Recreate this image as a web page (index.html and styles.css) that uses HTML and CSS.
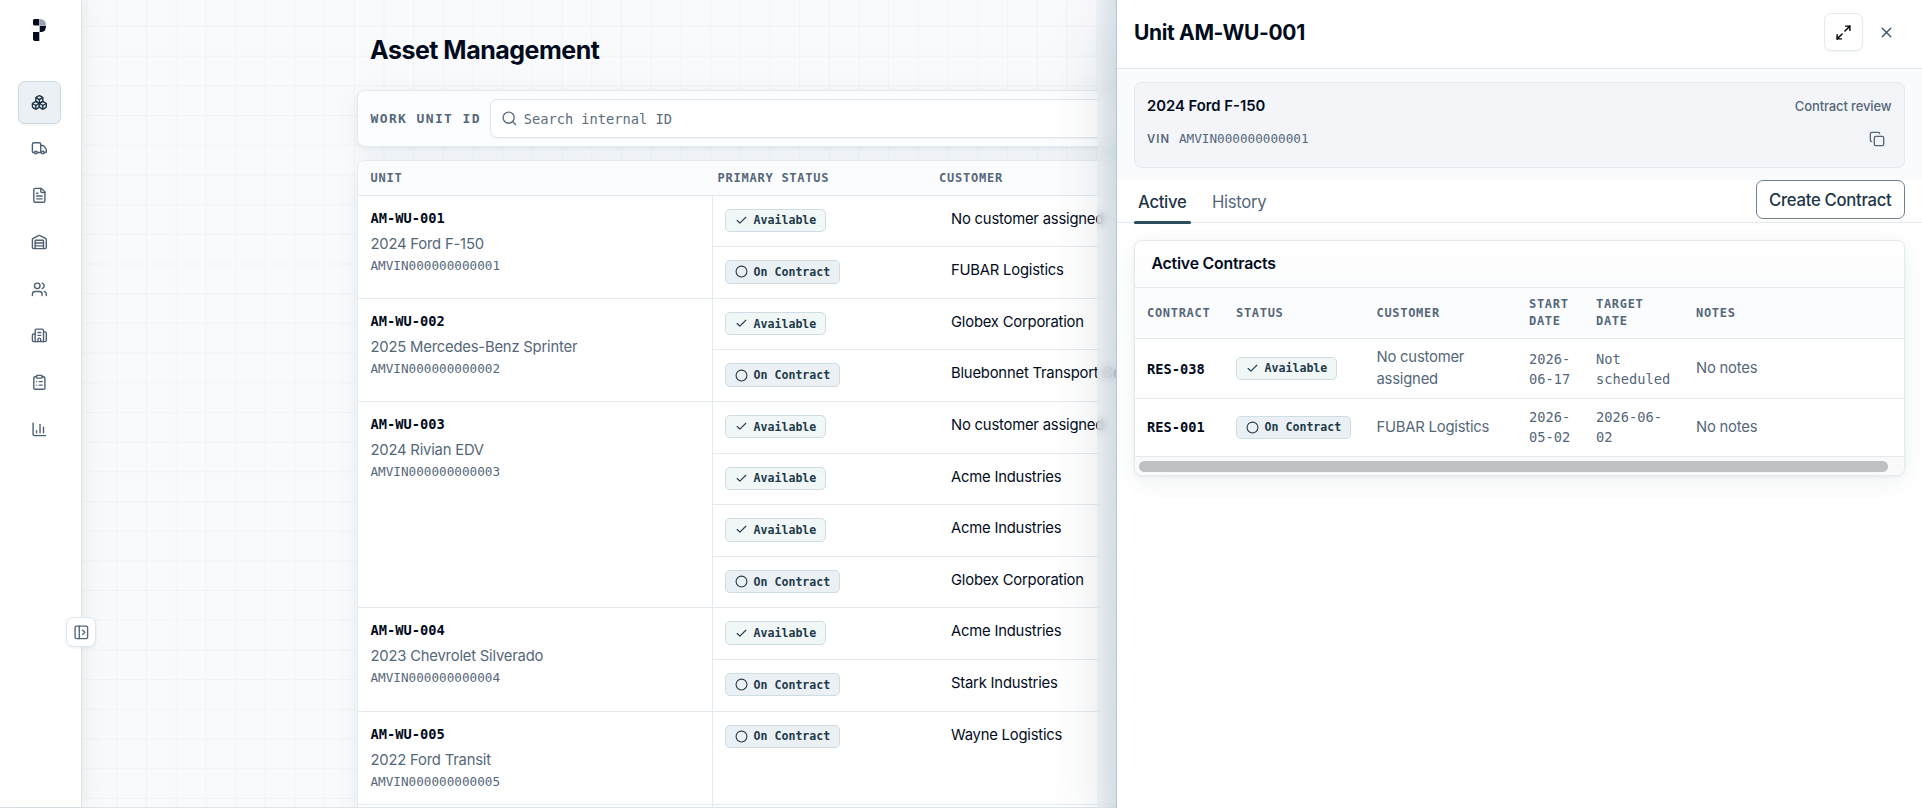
FILE: index.html
```
<!DOCTYPE html>
<html lang="en">
<head>
<meta charset="utf-8">
<title>Asset Management</title>
<link rel="stylesheet" href="styles.css">
</head>
<body>
<svg class="sprite" aria-hidden="true">
  <symbol id="i-boxes" viewBox="0 0 24 24"><path d="M2.97 12.92A2 2 0 0 0 2 14.63v3.24a2 2 0 0 0 .97 1.71l3 1.8a2 2 0 0 0 2.06 0L12 19v-5.5l-5-3-4.03 2.42Z"/><path d="m7 16.5-4.74-2.85"/><path d="m7 16.5 5-3"/><path d="M7 16.5v5.17"/><path d="M12 13.5V19l3.97 2.38a2 2 0 0 0 2.06 0l3-1.8a2 2 0 0 0 .97-1.71v-3.24a2 2 0 0 0-.97-1.71L17 10.5l-5 3Z"/><path d="m17 16.5-5-3"/><path d="m17 16.5 4.74-2.85"/><path d="M17 16.5v5.17"/><path d="M7.97 4.42A2 2 0 0 0 7 6.13v4.37l5 3 5-3V6.13a2 2 0 0 0-.97-1.71l-3-1.8a2 2 0 0 0-2.06 0l-3 1.8Z"/><path d="M12 8 7.26 5.15"/><path d="m12 8 4.74-2.85"/><path d="M12 13.5V8"/></symbol>
  <symbol id="i-truck" viewBox="0 0 24 24"><path d="M14 18V6a2 2 0 0 0-2-2H4a2 2 0 0 0-2 2v11a1 1 0 0 0 1 1h2"/><path d="M15 18H9"/><path d="M19 18h2a1 1 0 0 0 1-1v-3.65a1 1 0 0 0-.22-.624l-3.48-4.35A1 1 0 0 0 17.52 8H14"/><circle cx="17" cy="18" r="2"/><circle cx="7" cy="18" r="2"/></symbol>
  <symbol id="i-file" viewBox="0 0 24 24"><path d="M15 2H6a2 2 0 0 0-2 2v16a2 2 0 0 0 2 2h12a2 2 0 0 0 2-2V7Z"/><path d="M14 2v4a2 2 0 0 0 2 2h4"/><path d="M10 9H8"/><path d="M16 13H8"/><path d="M16 17H8"/></symbol>
  <symbol id="i-warehouse" viewBox="0 0 24 24"><path d="M18 21V10a1 1 0 0 0-1-1H7a1 1 0 0 0-1 1v11"/><path d="M22 19a2 2 0 0 1-2 2H4a2 2 0 0 1-2-2V8a2 2 0 0 1 1.132-1.803l7.95-3.974a2 2 0 0 1 1.837 0l7.948 3.974A2 2 0 0 1 22 8z"/><path d="M6 13h12"/><path d="M6 17h12"/></symbol>
  <symbol id="i-users" viewBox="0 0 24 24"><path d="M16 21v-2a4 4 0 0 0-4-4H6a4 4 0 0 0-4 4v2"/><circle cx="9" cy="7" r="4"/><path d="M22 21v-2a4 4 0 0 0-3-3.87"/><path d="M16 3.13a4 4 0 0 1 0 7.75"/></symbol>
  <symbol id="i-building" viewBox="0 0 24 24"><path d="M10 12h4"/><path d="M10 8h4"/><path d="M14 21v-3a2 2 0 0 0-4 0v3"/><path d="M6 10H4a2 2 0 0 0-2 2v7a2 2 0 0 0 2 2h16a2 2 0 0 0 2-2V9a2 2 0 0 0-2-2h-2"/><path d="M6 21V5a2 2 0 0 1 2-2h8a2 2 0 0 1 2 2v16"/></symbol>
  <symbol id="i-clipboard" viewBox="0 0 24 24"><rect width="8" height="4" x="8" y="2" rx="1"/><path d="M16 4h2a2 2 0 0 1 2 2v14a2 2 0 0 1-2 2H6a2 2 0 0 1-2-2V6a2 2 0 0 1 2-2h2"/><path d="M12 11h4"/><path d="M12 16h4"/><path d="M8 11h.01"/><path d="M8 16h.01"/></symbol>
  <symbol id="i-chart" viewBox="0 0 24 24"><path d="M3 3v16a2 2 0 0 0 2 2h16"/><path d="M18 17V9"/><path d="M13 17V5"/><path d="M8 17v-3"/></symbol>
  <symbol id="i-panel" viewBox="0 0 24 24"><rect width="18" height="18" x="3" y="3" rx="2"/><path d="M9 3v18"/><path d="m14 9 3 3-3 3"/></symbol>
  <symbol id="i-search" viewBox="0 0 24 24"><circle cx="11" cy="11" r="8"/><path d="m21 21-4.3-4.3"/></symbol>
  <symbol id="i-check" viewBox="0 0 24 24"><path d="M20 6 9 17l-5-5"/></symbol>
  <symbol id="i-circle" viewBox="0 0 24 24"><circle cx="12" cy="12" r="10"/></symbol>
  <symbol id="i-expand" viewBox="0 0 24 24"><path d="M15 3h6v6"/><path d="m21 3-7 7"/><path d="m3 21 7-7"/><path d="M9 21H3v-6"/></symbol>
  <symbol id="i-x" viewBox="0 0 24 24"><path d="M18 6 6 18"/><path d="m6 6 12 12"/></symbol>
  <symbol id="i-copy" viewBox="0 0 24 24"><rect width="14" height="14" x="8" y="8" rx="2"/><path d="M4 16c-1.1 0-2-.9-2-2V4c0-1.1.9-2 2-2h10c1.1 0 2 .9 2 2"/></symbol>
</svg>

<div class="app">
  <nav class="sidebar">
    <svg class="logo" viewBox="0 0 13 22"><path fill="#020b1c" d="M0 1.5Q0 0 1.5 0H6.3V6.4H1.5Q0 6.400 0 5ZM6.700 6.800H13Q13 13 8.500 13H6.700ZM0 13H6.300V22H2Q0 22 0 20Z"/><path fill="#9aa3ae" d="M6.700 0Q13 0 13 6.400H6.700Z"/></svg>
    <div class="nav-list">
      <a class="nav-item nav-active"><svg class="icon"><use href="#i-boxes"/></svg></a>
      <a class="nav-item"><svg class="icon"><use href="#i-truck"/></svg></a>
      <a class="nav-item"><svg class="icon"><use href="#i-file"/></svg></a>
      <a class="nav-item"><svg class="icon"><use href="#i-warehouse"/></svg></a>
      <a class="nav-item"><svg class="icon"><use href="#i-users"/></svg></a>
      <a class="nav-item"><svg class="icon"><use href="#i-building"/></svg></a>
      <a class="nav-item"><svg class="icon"><use href="#i-clipboard"/></svg></a>
      <a class="nav-item"><svg class="icon"><use href="#i-chart"/></svg></a>
    </div>
    <button class="nav-toggle"><svg class="icon"><use href="#i-panel"/></svg></button>
  </nav>

  <main class="main">
    <h1 class="title">Asset Management</h1>
    <section class="filter">
      <span class="filter-label">WORK UNIT ID</span>
      <div class="search"><svg class="icon"><use href="#i-search"/></svg><span>Search internal ID</span></div>
    </section>
    <section class="units">
      <div class="units-head"><span>UNIT</span><span>PRIMARY STATUS</span><span>CUSTOMER</span></div>
      <article class="unit">
        <div class="unit-info"><b>AM-WU-001</b><span>2024 Ford F-150</span><code>AMVIN000000000001</code></div>
        <div class="entries">
          <div class="entry"><span class="badge ok"><svg class="icon"><use href="#i-check"/></svg>Available</span><span>No customer assigned</span></div>
          <div class="entry"><span class="badge"><svg class="icon"><use href="#i-circle"/></svg>On Contract</span><span>FUBAR Logistics</span></div>
        </div>
      </article>
      <article class="unit">
        <div class="unit-info"><b>AM-WU-002</b><span>2025 Mercedes-Benz Sprinter</span><code>AMVIN000000000002</code></div>
        <div class="entries">
          <div class="entry"><span class="badge ok"><svg class="icon"><use href="#i-check"/></svg>Available</span><span>Globex Corporation</span></div>
          <div class="entry"><span class="badge"><svg class="icon"><use href="#i-circle"/></svg>On Contract</span><span>Bluebonnet Transport Co</span></div>
        </div>
      </article>
      <article class="unit">
        <div class="unit-info"><b>AM-WU-003</b><span>2024 Rivian EDV</span><code>AMVIN000000000003</code></div>
        <div class="entries">
          <div class="entry"><span class="badge ok"><svg class="icon"><use href="#i-check"/></svg>Available</span><span>No customer assigned</span></div>
          <div class="entry"><span class="badge ok"><svg class="icon"><use href="#i-check"/></svg>Available</span><span>Acme Industries</span></div>
          <div class="entry"><span class="badge ok"><svg class="icon"><use href="#i-check"/></svg>Available</span><span>Acme Industries</span></div>
          <div class="entry"><span class="badge"><svg class="icon"><use href="#i-circle"/></svg>On Contract</span><span>Globex Corporation</span></div>
        </div>
      </article>
      <article class="unit">
        <div class="unit-info"><b>AM-WU-004</b><span>2023 Chevrolet Silverado</span><code>AMVIN000000000004</code></div>
        <div class="entries">
          <div class="entry"><span class="badge ok"><svg class="icon"><use href="#i-check"/></svg>Available</span><span>Acme Industries</span></div>
          <div class="entry"><span class="badge"><svg class="icon"><use href="#i-circle"/></svg>On Contract</span><span>Stark Industries</span></div>
        </div>
      </article>
      <article class="unit">
        <div class="unit-info"><b>AM-WU-005</b><span>2022 Ford Transit</span><code>AMVIN000000000005</code></div>
        <div class="entries">
          <div class="entry"><span class="badge"><svg class="icon"><use href="#i-circle"/></svg>On Contract</span><span>Wayne Logistics</span></div>
        </div>
      </article>
      <article class="unit"><div class="unit-info"></div><div class="entries"></div></article>
    </section>
  </main>
</div>

<aside class="drawer">
  <div class="drawer-edge"></div>
  <header class="drawer-head">
    <h2>Unit AM-WU-001</h2>
    <button class="expand"><svg class="icon"><use href="#i-expand"/></svg></button>
    <button class="close"><svg class="icon"><use href="#i-x"/></svg></button>
  </header>
  <div class="summary-wrap">
    <div class="summary">
      <div class="summary-row"><strong>2024 Ford F-150</strong><span class="review">Contract review</span></div>
      <div class="summary-row vin-row"><span class="vin-label">VIN</span><code>AMVIN000000000001</code><svg class="icon copy"><use href="#i-copy"/></svg></div>
    </div>
  </div>
  <div class="tabs">
    <a class="tab tab-active">Active</a>
    <a class="tab">History</a>
    <button class="create">Create Contract</button>
  </div>
  <section class="contracts">
    <h3>Active Contracts</h3>
    <div class="grid grid-head"><span>CONTRACT</span><span>STATUS</span><span>CUSTOMER</span><span>START<br>DATE</span><span>TARGET<br>DATE</span><span>NOTES</span></div>
    <div class="grid row-a"><b>RES-038</b><div><span class="badge ok"><svg class="icon"><use href="#i-check"/></svg>Available</span></div><span>No customer<br>assigned</span><code>2026-<br>06-17</code><code>Not<br>scheduled</code><span>No notes</span></div>
    <div class="grid row-b"><b>RES-001</b><div><span class="badge"><svg class="icon"><use href="#i-circle"/></svg>On Contract</span></div><span>FUBAR Logistics</span><code>2026-<br>05-02</code><code>2026-06-<br>02</code><span>No notes</span></div>
    <div class="scroll"><div class="thumb"></div></div>
  </section>
</aside>
</body>
</html>
```
FILE: styles.css
```
* { box-sizing: border-box; }
:root {
  --ink: #020b1c;
  --muted: #55677a;
  --line: #e4ebf0;
  --mono: "DejaVu Sans Mono", monospace;
}
body { margin: 0; height: 808px; overflow: hidden; font: 14.8px/20px Inter, sans-serif; letter-spacing: -.2px; color: var(--ink); background: #f9fafc; }
h1, h2, h3 { margin: 0; }
button { font: inherit; letter-spacing: inherit; padding: 0; margin: 0; background: #fff; }
code { font-family: var(--mono); letter-spacing: 0; }
b { letter-spacing: 0; }
.sprite { display: none; }
.icon { display: block; flex: none; width: 16.700px; height: 16.700px; fill: none; stroke: currentColor; stroke-width: 2; stroke-linecap: round; stroke-linejoin: round; }

.app { display: flex; height: 808px; border-bottom: 1px solid #dfe6eb; }

.sidebar { position: relative; z-index: 1; flex: none; width: 82px; padding: 19px 0 0 18px; background: #fff; border-right: 1px solid #dfe7ec; box-shadow: 1px 0 6px rgba(30, 70, 90, .05), 6px 0 24px rgba(30, 70, 90, .05); }
.logo { display: block; width: 13px; height: 22px; margin-left: 15px; }
.nav-list { display: flex; flex-direction: column; gap: 3.750px; margin-top: 39.500px; }
.nav-item { display: grid; place-items: center; width: 43px; height: 43px; border: 1px solid transparent; border-radius: 7px; color: #4d6074; }
.nav-active { background: #ebf0f4; border-color: #cfdbe2; color: #1c3446; box-shadow: 0 1px 2px rgba(30, 70, 90, .08); }
.nav-toggle { position: absolute; left: 66px; top: 617px; width: 30px; height: 30px; display: grid; place-items: center; border: 1px solid #dfe8ee; border-radius: 7px; color: #55677a; box-shadow: 0 1px 3px rgba(30, 70, 90, .08); }

.main {
  flex: 1; padding: 34px 275px 0; overflow: hidden;
  background-image: linear-gradient(#f1f4f6 1px, transparent 1px), linear-gradient(90deg, #f1f4f6 1px, transparent 1px);
  background-size: 29.700px 29.700px; background-position: 4.600px 26px;
}
.title { padding-left: 13px; font-size: 25px; line-height: 32px; font-weight: 700; letter-spacing: -.5px; }
.filter { display: flex; align-items: center; gap: 10px; height: 57px; margin-top: 24px; padding: 0 12px 0 12.500px; background: #fcfdfe; border: 1px solid var(--line); border-radius: 8px; box-shadow: 0 1px 3px rgba(30, 70, 90, .07), 0 6px 24px rgba(30, 90, 100, .07); }
.filter-label { width: 109px; white-space: nowrap; font: bold 13px/16px var(--mono); letter-spacing: 1.370px; color: var(--muted); }
.search { flex: 1; display: flex; align-items: center; gap: 6.500px; height: 38.500px; padding-left: 10px; background: #fff; border: 1px solid #e1e8ed; border-radius: 7px; font: 13.700px/20px var(--mono); letter-spacing: 0; color: #5c6d7e; box-shadow: 0 1px 2px rgba(30, 70, 90, .06); }

.units { margin-top: 12.500px; background: #fff; border: 1px solid var(--line); border-radius: 8px; box-shadow: 0 6px 24px rgba(30, 90, 100, .07); }
.units-head { display: grid; grid-template-columns: 347px 221.500px 1fr; align-items: center; height: 35.100px; padding-left: 12.500px; background: #fbfcfd; border-radius: 8px 8px 0 0; border-bottom: 1px solid var(--line); font: bold 12px/16px var(--mono); letter-spacing: .760px; color: var(--muted); }
.unit { display: flex; min-height: 93.500px; border-bottom: 1px solid var(--line); }
.unit-info { display: flex; flex-direction: column; width: 354.500px; padding: 12px 0 0 12.500px; border-right: 1px solid var(--line); }
.unit-info b { font: bold 13.700px/20px var(--mono); }
.unit-info span { line-height: 22px; margin-top: 5px; color: var(--muted); }
.unit-info code { font-size: 12.660px; line-height: 18px; margin-top: 2px; color: var(--muted); }
.entries { flex: 1; }
.entry { display: grid; grid-template-columns: 226px 1fr; align-items: start; height: 51.600px; padding: 13px 0 0 12.500px; border-bottom: 1px solid var(--line); }
.entry:last-child { border-bottom: 0; height: 50.600px; }
.entry > span:last-child { white-space: nowrap; line-height: 21px; }
.badge { display: inline-flex; justify-self: start; align-items: center; gap: 6px; height: 23.500px; padding: 0 8.500px; border: 1px solid #cfdce4; border-radius: 5px; background: #ebf0f4; color: #213a4a; font: bold 11.600px/16px var(--mono); letter-spacing: 0; white-space: nowrap; }
.badge.ok { background: #f1f6f7; }
.badge .icon { width: 13px; height: 13px; }

.drawer { position: absolute; z-index: 2; left: 1116px; top: 0; width: 806px; height: 808px; background: #fff; border-left: 1px solid #b8c8d2; box-shadow: 0 24px 60px rgba(25, 60, 80, .22); }
.drawer-edge { position: absolute; left: -20px; top: 0; width: 19px; height: 808px; background: linear-gradient(90deg, rgba(226, 232, 236, .5), rgba(197, 213, 222, .6)); backdrop-filter: blur(5px); }
.drawer-head { display: flex; align-items: center; height: 69px; padding: 0 17px; border-bottom: 1px solid var(--line); }
.drawer-head h2 { flex: 1; font-size: 21px; line-height: 28px; font-weight: 700; letter-spacing: -.35px; padding-bottom: 2px; }
.expand { display: grid; place-items: center; width: 38.500px; height: 38.500px; margin-bottom: 4px; border: 1px solid var(--line); border-radius: 7px; box-shadow: 0 1px 2px rgba(30, 70, 90, .06); }
.expand .icon, .close .icon { width: 17px; height: 17px; }
.close { display: grid; place-items: center; width: 37.500px; height: 38px; margin: 0 0 4px 5px; border: 0; color: #41566a; }
.summary-wrap { height: 111px; padding: 12.500px 17px; background: #fafbfd; }
.summary { height: 86px; padding: 11.500px 12.500px 0 12px; background: #f3f5f9; border: 1px solid var(--line); border-radius: 7px; }
.summary-row { display: flex; align-items: center; justify-content: space-between; height: 23px; }
.summary strong { font-size: 14.800px; font-weight: 600; letter-spacing: 0; }
.review { font-size: 13px; font-weight: 500; letter-spacing: -.120px; color: var(--muted); }
.vin-row { justify-content: flex-start; margin-top: 10px; }
.vin-label { width: 32px; font-size: 11.300px; font-weight: 600; letter-spacing: 1.100px; padding-top: 1px; color: var(--muted); }
.vin-row code { flex: 1; font-size: 12.660px; color: var(--muted); }
.copy { width: 16px; height: 16px; margin-right: 6.500px; color: #55677a; }
.tabs { display: flex; height: 43px; padding: 0 17px; border-bottom: 1px solid var(--line); font-size: 16.700px; font-weight: 500; letter-spacing: -.3px; }
.tab { position: relative; height: 43px; line-height: 45px; padding: 0 4px; margin-right: 17.500px; color: var(--muted); font-weight: 400; }
.tab-active { color: #1d3547; font-weight: 500; }
.tab-active::after { content: ""; position: absolute; left: 0; right: 0; bottom: -1px; height: 3px; border-radius: 2px; background: #2e4d5c; }
.create { width: 149.500px; height: 39px; margin-left: auto; border: 1px solid #6f8091; border-radius: 7px; font-weight: 500; color: #1d3547; }
.contracts { margin: 17px 17px 0; height: 236px; background: #fff; border: 1px solid var(--line); border-radius: 8px; box-shadow: 0 6px 24px rgba(30, 70, 90, .07), 0 1px 3px rgba(30, 70, 90, .07); }
.contracts h3 { height: 47px; padding-left: 16.500px; line-height: 46px; font-size: 15.800px; font-weight: 600; border-bottom: 1px solid var(--line); background: linear-gradient(#fff, #fbfcfd); border-radius: 8px 8px 0 0; }
.grid { display: grid; grid-template-columns: 89px 140.500px 152.500px 67px 100px 1fr; align-items: center; padding-left: 12px; border-bottom: 1px solid var(--line); color: var(--muted); }
.grid-head { height: 51px; font: bold 12px/16.700px var(--mono); letter-spacing: .700px; background: #fbfcfd; }
.grid b { font: bold 13.700px/20px var(--mono); color: var(--ink); }
.grid span { line-height: 21.300px; }
.grid-head span { line-height: 16.700px; }
.grid code { font-size: 13.700px; line-height: 20px; }
.grid .badge { height: 22.500px; }
.grid div { display: flex; }
.row-a { height: 60px; }
.row-b { height: 57.500px; }
.scroll { height: 18.500px; padding: 4px 3.500px; background: #fafafb; border-radius: 0 0 8px 8px; }
.thumb { width: 749.500px; height: 11px; border-radius: 6px; background: #bfc0c2; }
```
